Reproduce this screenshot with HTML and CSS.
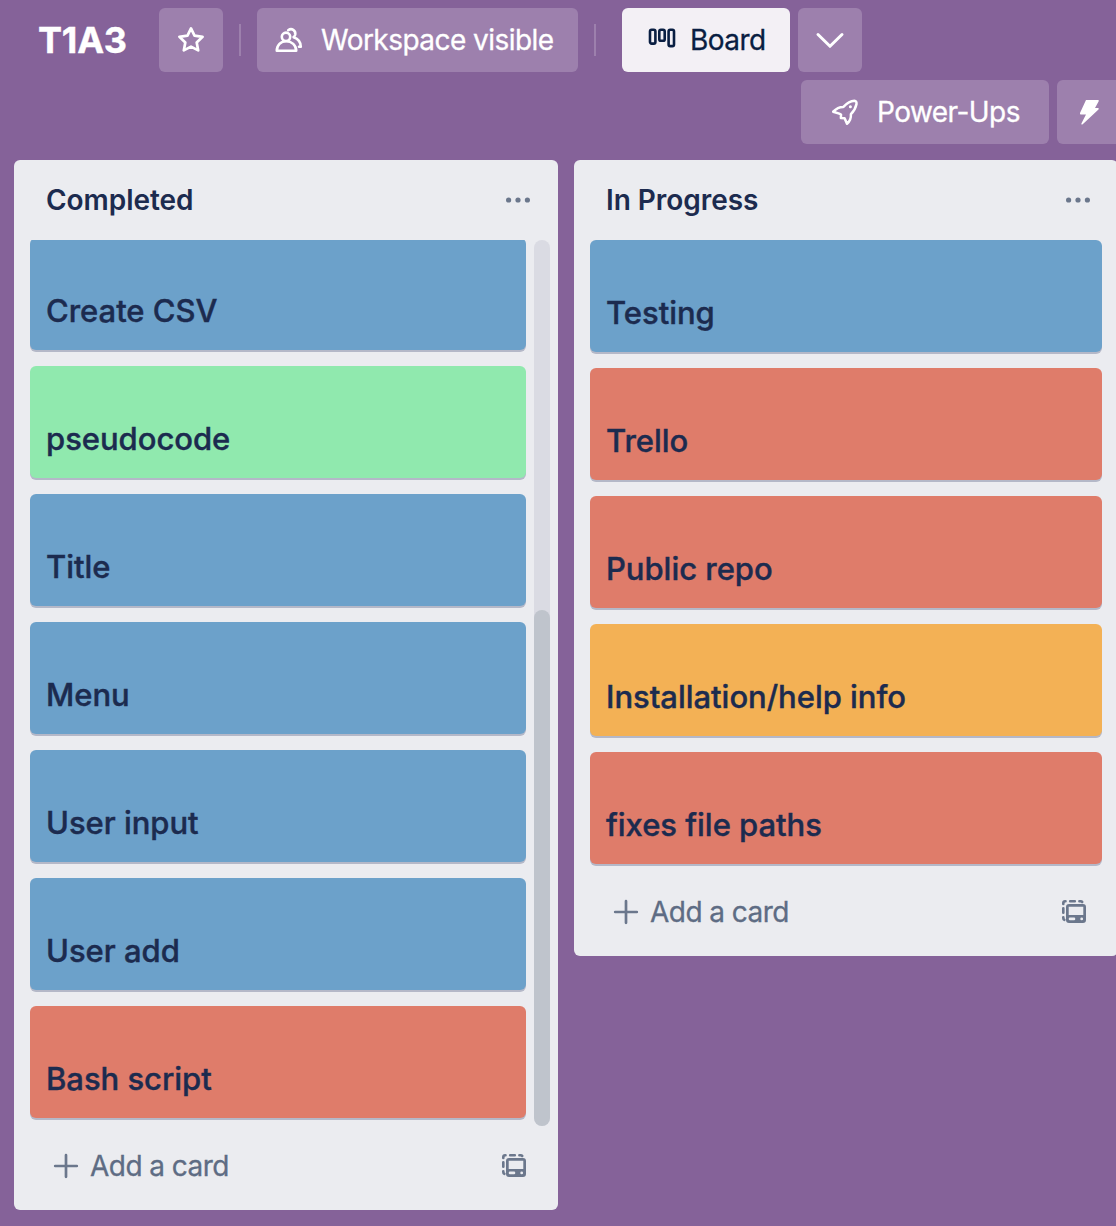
FILE: index.html
```html
<!DOCTYPE html>
<html lang="en">
<head>
<meta charset="utf-8">
<title>T1A3</title>
<link rel="stylesheet" href="styles.css">
</head>
<body>
<svg class="symbols" aria-hidden="true">
  <symbol id="i-dots" viewBox="0 0 32 32"><g fill="currentColor"><circle cx="6.6" cy="16" r="2.6"/><circle cx="16" cy="16" r="2.6"/><circle cx="25.4" cy="16" r="2.6"/></g></symbol>
  <symbol id="i-plus" viewBox="0 0 32 32"><path d="M5.2 16H26.8M16 5.2V26.8" fill="none" stroke="currentColor" stroke-width="2.7" stroke-linecap="round"/></symbol>
  <symbol id="i-template" viewBox="0 0 32 32">
    <path d="M5.3 7.9V7Q5.3 5.3 7 5.3H7.5M12.2 5.3H16.8M21.4 5.3H22.5Q23.8 5.3 24.2 6M5.3 12.2V16.8M5.3 21.2V22Q5.3 23.4 6.3 23.8" fill="none" stroke="currentColor" stroke-width="2.6" stroke-linecap="round"/>
    <path fill-rule="evenodd" fill="currentColor" d="M11 8H25Q28 8 28 11V24Q28 27 25 27H11Q8 27 8 24V11Q8 8 11 8ZM10.7 10.7V19H25.3V10.7ZM12 21.6A1.3 1.3 0 0 0 12 24.2H16A1.3 1.3 0 0 0 16 21.6ZM23.7 21.5A1.4 1.4 0 1 0 23.7 24.3A1.4 1.4 0 0 0 23.7 21.5Z"/>
  </symbol>
</svg>

<header class="toolbar">
  <div class="toolbar-row">
    <h1 class="board-name">T1A3</h1>
    <button class="btn btn-square" aria-label="Star">
      <svg class="icon" viewBox="0 0 32 32"><path d="M16 4.4L19.5 11.7L27.6 12.8L21.7 18.4L23.2 26.4L16 22.6L8.8 26.4L10.3 18.4L4.4 12.8L12.5 11.7Z" fill="none" stroke="currentColor" stroke-width="2.7" stroke-linejoin="round"/></svg>
    </button>
    <span class="divider"></span>
    <button class="btn btn-visibility">
      <svg class="icon" viewBox="0 0 32 32"><g fill="none" stroke="currentColor" stroke-width="2.6" stroke-linejoin="round" stroke-linecap="round"><circle cx="13" cy="12.8" r="4.2"/><path d="M3.8 26.8C3.8 21.2 7.8 17.2 13.2 17.2S23.2 21.2 23.2 26.8Z"/><path d="M15.2 6.2C18.6 3.6 23 6.3 22.2 10.8Q21.8 12.4 20.6 13.2C25.2 14.8 27.8 18 27.8 22.8H26"/></g></svg>
      <span class="label">Workspace visible</span>
    </button>
    <span class="divider divider-view"></span>
    <button class="btn btn-board">
      <svg class="icon" viewBox="0 0 32 32"><g fill="none" stroke="currentColor" stroke-width="2.6"><rect x="4" y="5.8" width="5.4" height="13.8" rx="1.6"/><rect x="13.3" y="5.8" width="5.4" height="11" rx="1.6"/><rect x="22.6" y="5.8" width="5.4" height="16.3" rx="1.6"/></g></svg>
      <span class="label">Board</span>
    </button>
    <button class="btn btn-square btn-chevron" aria-label="Views">
      <svg class="icon" viewBox="0 0 32 32"><path d="M4 10.5L16 22.3L28 10.5" fill="none" stroke="currentColor" stroke-width="3" stroke-linecap="round" stroke-linejoin="round"/></svg>
    </button>
  </div>
  <div class="toolbar-row toolbar-row-end">
    <button class="btn btn-powerups">
      <svg class="icon" viewBox="0 0 32 32"><path d="M4.2 15.7C7.2 12.5 9.6 10.8 14.4 10.9C18 7 21.5 4.8 25.4 4.7Q27.8 4.8 27.5 8C26.7 12.3 24.8 15.2 21.9 18.2C22.2 22.5 21.2 25.2 18 27.8L15.6 22.3L11.9 22.1L12 18.5L10.2 17.6Z" fill="none" stroke="currentColor" stroke-width="2.5" stroke-linejoin="round"/><circle cx="21.4" cy="10.8" r="1.5" fill="currentColor"/></svg>
      <span class="label">Power-Ups</span>
    </button>
    <button class="btn btn-automation" aria-label="Automation">
      <svg class="icon" viewBox="0 0 32 32"><path d="M15 4H27Q28.2 4 27.7 5.2L24 12H27Q28.4 12.2 27.5 13.5L11.7 28.3Q10.2 29.2 10.4 27.4L15 18.6H10Q8.6 18.5 9 17Z" fill="currentColor"/></svg>
    </button>
  </div>
</header>

<main class="board">
  <section class="list">
    <div class="list-header">
      <h2 class="list-title">Completed</h2>
      <svg class="icon icon-menu"><use href="#i-dots"/></svg>
    </div>
    <div class="list-body list-body-scrolled">
      <div class="cards">
        <article class="card blue">Create CSV</article>
        <article class="card green">pseudocode</article>
        <article class="card blue">Title</article>
        <article class="card blue">Menu</article>
        <article class="card blue">User input</article>
        <article class="card blue">User add</article>
        <article class="card red">Bash script</article>
      </div>
      <div class="scroll-track"><div class="scroll-thumb"></div></div>
    </div>
    <div class="list-footer">
      <svg class="icon"><use href="#i-plus"/></svg>
      <span class="add-label">Add a card</span>
      <svg class="icon icon-template"><use href="#i-template"/></svg>
    </div>
  </section>

  <section class="list">
    <div class="list-header">
      <h2 class="list-title">In Progress</h2>
      <svg class="icon icon-menu"><use href="#i-dots"/></svg>
    </div>
    <div class="list-body">
      <div class="cards">
        <article class="card blue">Testing</article>
        <article class="card red">Trello</article>
        <article class="card red">Public repo</article>
        <article class="card orange">Installation/help info</article>
        <article class="card red">fixes file paths</article>
      </div>
    </div>
    <div class="list-footer">
      <svg class="icon"><use href="#i-plus"/></svg>
      <span class="add-label">Add a card</span>
      <svg class="icon icon-template"><use href="#i-template"/></svg>
    </div>
  </section>
</main>
</body>
</html>
```
FILE: styles.css
```css
* { box-sizing: border-box; }
html, body { margin: 0; height: 100%; overflow: hidden; }
body {
  background: #856299;
  color: #1c2b4f;
  font-family: Inter, "Liberation Sans", sans-serif;
  font-size: 28px;
  letter-spacing: -0.54px;
}
h1, h2 { margin: 0; }
.symbols { display: none; }
.icon { width: 32px; height: 32px; flex: none; display: block; }

.toolbar {
  display: flex;
  flex-direction: column;
  gap: 8px;
  padding-top: 8px;
  height: 160px;
}
.toolbar-row { display: flex; align-items: center; height: 64px; }
.toolbar-row-end { padding-left: 801px; gap: 8px; }
.board-name {
  width: 121px;
  margin-left: 38px;
  color: #fff;
  font-size: 36px;
  font-weight: 700;
  line-height: 64px;
  letter-spacing: -0.2px;
  white-space: nowrap;
  -webkit-text-stroke: 0.4px;
}
.btn {
  display: flex;
  align-items: center;
  flex: none;
  height: 64px;
  padding: 0;
  border: 0;
  border-radius: 6px;
  background: #9d80ad;
  color: #fff;
  font: inherit;
  letter-spacing: inherit;
}
.btn-square { width: 64px; justify-content: center; }
.btn-visibility { width: 321px; padding-left: 16px; gap: 16px; }
.btn-board { width: 168px; padding-left: 24px; gap: 12px; background: #f3f0f5; color: #091e42; }
.btn-chevron { margin-left: 8px; }
.btn-powerups { width: 248px; padding-left: 28px; gap: 16px; }
.btn-automation { width: 64px; padding-left: 14px; }
.divider { width: 2px; height: 32px; margin: 0 16px; background: #9d80ad; flex: none; }
.divider-view { margin-right: 26px; }
.label, .add-label {
  padding-top: 1px;
  line-height: 63px;
  white-space: nowrap;
  -webkit-text-stroke: 0.3px;
}

.board { display: flex; align-items: flex-start; gap: 16px; padding-left: 14px; }
.list {
  flex: none;
  width: 544px;
  padding-bottom: 4px;
  border-radius: 6px;
  background: #ebecf0;
}
.list-header {
  display: flex;
  align-items: center;
  justify-content: space-between;
  height: 80px;
  padding: 0 24px 0 32px;
}
.list-title {
  padding-top: 1px;
  font-size: 28px;
  font-weight: 600;
  line-height: 79px;
  letter-spacing: -0.05px;
  white-space: nowrap;
}
.icon-menu { color: #6b778c; }
.list-body { display: flex; gap: 8px; padding: 0 16px 8px; }
.list-body-scrolled { height: 886px; padding: 0 8px 0 16px; overflow: hidden; }
.cards { flex: 1; display: flex; flex-direction: column; gap: 16px; }
.list-body-scrolled .cards { margin-top: -2px; }
.list-body-scrolled .card:first-child { clip-path: inset(2px 0 -2px); }
.card {
  display: flex;
  align-items: flex-end;
  flex: none;
  height: 112px;
  padding: 0 16px 19px;
  border-radius: 6px;
  box-shadow: 0 2px 0 #b4b8c8;
  font-size: 31px;
  font-weight: 500;
  line-height: 40px;
  letter-spacing: -0.03px;
  white-space: nowrap;
  -webkit-text-stroke: 0.4px;
}
.blue { background: #6ca1ca; }
.green { background: #90e9ae; }
.red { background: #df7c6a; }
.orange { background: #f3b155; }

.scroll-track {
  display: flex;
  align-items: flex-end;
  flex: none;
  width: 16px;
  height: 886px;
  border-radius: 8px;
  background: #dadbe3;
}
.scroll-thumb { width: 16px; height: 516px; border-radius: 8px; background: #bfc4cc; }

.list-footer {
  display: flex;
  align-items: center;
  height: 80px;
  padding: 0 28px 0 36px;
  color: #5e6c84;
}
.list-footer .icon { color: #6b778c; }
.add-label { margin-left: 8px; }
.list-footer .icon-template { margin-left: auto; }
```
